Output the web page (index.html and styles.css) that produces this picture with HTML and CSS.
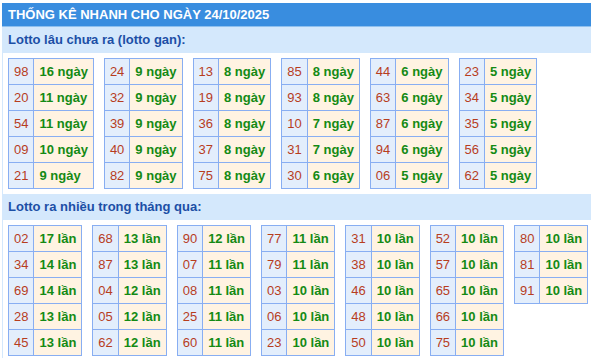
FILE: index.html
```html
<!DOCTYPE html>
<html lang="vi">
<head>
<meta charset="utf-8">
<title>Thống kê nhanh</title>
<link rel="stylesheet" href="styles.css">
</head>
<body>
<div class="wrap">
  <div class="title">THỐNG KÊ NHANH CHO NGÀY 24/10/2025</div>
  <div class="sub">Lotto lâu chưa ra (lotto gan):</div>
  <div class="grid">
    <table class="lt"><tr><td class="n">98</td><td class="v">16 ngày</td></tr><tr><td class="n">20</td><td class="v">11 ngày</td></tr><tr><td class="n">54</td><td class="v">11 ngày</td></tr><tr><td class="n">09</td><td class="v">10 ngày</td></tr><tr><td class="n">21</td><td class="v">9 ngày</td></tr></table>
    <table class="lt"><tr><td class="n">24</td><td class="v">9 ngày</td></tr><tr><td class="n">32</td><td class="v">9 ngày</td></tr><tr><td class="n">39</td><td class="v">9 ngày</td></tr><tr><td class="n">40</td><td class="v">9 ngày</td></tr><tr><td class="n">82</td><td class="v">9 ngày</td></tr></table>
    <table class="lt"><tr><td class="n">13</td><td class="v">8 ngày</td></tr><tr><td class="n">19</td><td class="v">8 ngày</td></tr><tr><td class="n">36</td><td class="v">8 ngày</td></tr><tr><td class="n">37</td><td class="v">8 ngày</td></tr><tr><td class="n">75</td><td class="v">8 ngày</td></tr></table>
    <table class="lt"><tr><td class="n">85</td><td class="v">8 ngày</td></tr><tr><td class="n">93</td><td class="v">8 ngày</td></tr><tr><td class="n">10</td><td class="v">7 ngày</td></tr><tr><td class="n">31</td><td class="v">7 ngày</td></tr><tr><td class="n">30</td><td class="v">6 ngày</td></tr></table>
    <table class="lt"><tr><td class="n">44</td><td class="v">6 ngày</td></tr><tr><td class="n">63</td><td class="v">6 ngày</td></tr><tr><td class="n">87</td><td class="v">6 ngày</td></tr><tr><td class="n">94</td><td class="v">6 ngày</td></tr><tr><td class="n">06</td><td class="v">5 ngày</td></tr></table>
    <table class="lt"><tr><td class="n">23</td><td class="v">5 ngày</td></tr><tr><td class="n">34</td><td class="v">5 ngày</td></tr><tr><td class="n">35</td><td class="v">5 ngày</td></tr><tr><td class="n">56</td><td class="v">5 ngày</td></tr><tr><td class="n">62</td><td class="v">5 ngày</td></tr></table>
  </div>
  <div class="sub">Lotto ra nhiều trong tháng qua:</div>
  <div class="grid">
    <table class="lt"><tr><td class="n">02</td><td class="v">17 lần</td></tr><tr><td class="n">34</td><td class="v">14 lần</td></tr><tr><td class="n">69</td><td class="v">14 lần</td></tr><tr><td class="n">28</td><td class="v">13 lần</td></tr><tr><td class="n">45</td><td class="v">13 lần</td></tr></table>
    <table class="lt"><tr><td class="n">68</td><td class="v">13 lần</td></tr><tr><td class="n">87</td><td class="v">13 lần</td></tr><tr><td class="n">04</td><td class="v">12 lần</td></tr><tr><td class="n">05</td><td class="v">12 lần</td></tr><tr><td class="n">62</td><td class="v">12 lần</td></tr></table>
    <table class="lt"><tr><td class="n">90</td><td class="v">12 lần</td></tr><tr><td class="n">07</td><td class="v">11 lần</td></tr><tr><td class="n">08</td><td class="v">11 lần</td></tr><tr><td class="n">25</td><td class="v">11 lần</td></tr><tr><td class="n">60</td><td class="v">11 lần</td></tr></table>
    <table class="lt"><tr><td class="n">77</td><td class="v">11 lần</td></tr><tr><td class="n">79</td><td class="v">11 lần</td></tr><tr><td class="n">03</td><td class="v">10 lần</td></tr><tr><td class="n">06</td><td class="v">10 lần</td></tr><tr><td class="n">23</td><td class="v">10 lần</td></tr></table>
    <table class="lt"><tr><td class="n">31</td><td class="v">10 lần</td></tr><tr><td class="n">38</td><td class="v">10 lần</td></tr><tr><td class="n">46</td><td class="v">10 lần</td></tr><tr><td class="n">48</td><td class="v">10 lần</td></tr><tr><td class="n">50</td><td class="v">10 lần</td></tr></table>
    <table class="lt"><tr><td class="n">52</td><td class="v">10 lần</td></tr><tr><td class="n">57</td><td class="v">10 lần</td></tr><tr><td class="n">65</td><td class="v">10 lần</td></tr><tr><td class="n">66</td><td class="v">10 lần</td></tr><tr><td class="n">75</td><td class="v">10 lần</td></tr></table>
    <table class="lt"><tr><td class="n">80</td><td class="v">10 lần</td></tr><tr><td class="n">81</td><td class="v">10 lần</td></tr><tr><td class="n">91</td><td class="v">10 lần</td></tr></table>
  </div>
</div>
</body>
</html>
```
FILE: styles.css
```css
html, body {
  margin: 0;
  padding: 0;
  background: #ffffff;
}
body {
  font-family: "Liberation Sans", Arial, sans-serif;
  font-size: 13px;
}
.wrap {
  margin: 3px 0 0 2px;
}
.title {
  background: #398ddf;
  color: #ffffff;
  font-weight: bold;
  height: 23px;
  line-height: 23px;
  padding-left: 6px;
  border-bottom: 1px solid #8fc0ee;
  white-space: nowrap;
}
.sub {
  background: #d4e8fc;
  color: #1c4fa6;
  font-weight: bold;
  height: 26px;
  line-height: 26px;
  padding-left: 6px;
}
.grid {
  display: flex;
  flex-wrap: wrap;
  align-items: flex-start;
  gap: 10px;
  padding: 5px 0 5px 5px;
  border-left: 1px solid #d4e8fc;
}
.lt {
  border-collapse: collapse;
}
.lt td {
  border: 1px solid #88aef2;
  padding: 5px 5px;
  line-height: 15px;
  white-space: nowrap;
}
.lt .n {
  background: #e3eefc;
  color: #b73d1e;
  text-align: center;
}
.lt .v {
  background: #fff3e2;
  color: #148a14;
  font-weight: bold;
  text-align: left;
}
```
